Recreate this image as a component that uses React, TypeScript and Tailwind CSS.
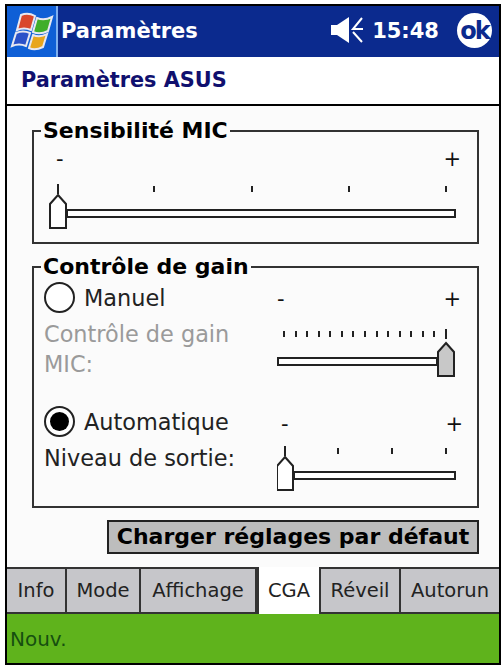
const font = { fontFamily: '"DejaVu Sans", sans-serif' };

function Slider({ ticks, thumb, disabled, width, trackTop }: { ticks: number[]; thumb: number; disabled?: boolean; width: number; trackTop: number }) {
  // thumb is the x of its centre, ticks sit above the track
  const trackLeft = thumb < width / 2 ? thumb + 9 : 1;
  const trackRight = thumb < width / 2 ? width - 1 : thumb - 9;
  const t = trackTop;
  return (
    <svg width={width} height={t + 24} className="block">
      {ticks.map((x) => (
        <line key={x} x1={x} x2={x} y1={x === thumb ? 0 : 2} y2={x === thumb ? 10 : 8} stroke="#222" strokeWidth="2" />
      ))}
      <rect x={trackLeft} y={t + 1} width={trackRight - trackLeft} height={7} fill="#fff" stroke="#222" strokeWidth="2" />
      <path
        d={`M${thumb} ${t - 14} L${thumb + 8} ${t - 5} V${t + 19} H${thumb - 8} V${t - 5} Z`}
        fill={disabled ? '#c8c8c8' : '#fff'}
        stroke="#222"
        strokeWidth="2"
      />
    </svg>
  );
}

function Radio({ checked }: { checked?: boolean }) {
  return (
    <span className="flex h-[31px] w-[31px] shrink-0 items-center justify-center rounded-full border-2 border-[#222] bg-white">
      {checked && <span className="h-[19px] w-[19px] rounded-full bg-black" />}
    </span>
  );
}

function Group({ title, className, children }: { title: string; className: string; children: React.ReactNode }) {
  return (
    <fieldset className={`ml-[25px] mr-[20px] border-2 border-[#333] ${className}`}>
      <legend className="ml-[7px] px-[2px] text-[22px] font-bold leading-[26px] text-black">{title}</legend>
      {children}
    </fieldset>
  );
}

function PlusMinus({ className }: { className: string }) {
  return (
    <div className={`flex items-center justify-between text-[21px] leading-[24px] text-[#111] ${className}`}>
      <span>-</span>
      <span>+</span>
    </div>
  );
}

const manualTicks = Array.from({ length: 15 }, (_, i) => 7 + Math.round(i * 11.57));

export default function App() {
  const tabs = [
    { label: 'Info', w: 'w-[60px]' },
    { label: 'Mode', w: 'w-[74px]' },
    { label: 'Affichage', w: 'w-[116px]' },
    { label: 'CGA', w: 'w-[64px]', active: true },
    { label: 'Réveil', w: 'w-[80px]' },
    { label: 'Autorun', w: 'flex-1' },
  ];

  return (
    <div className="h-[668px] w-[504px] bg-white pl-[5px] pr-[3px] pt-1 pb-[3px]" style={font}>
      <div className="flex h-full flex-col border-2 border-black bg-[#fbfbfb]">
        {/* title bar */}
        <div className="flex h-[51px] shrink-0 items-center bg-[#0b2a8e] text-white">
          <div className="flex h-full w-[51px] shrink-0 items-center justify-center border-r-2 border-[#7fb0ee] bg-[#0f5fd6]">
            <svg width="44" height="40" viewBox="0 0 44 40">
              <path d="M11 3 Q18 0 25 4 L21 18 Q14 15 7 18 Z" fill="#d9472b" stroke="#e8e8f0" strokeWidth="2" />
              <path d="M27 6 Q34 9 42 5 L38 19 Q30 23 23 20 Z" fill="#3fae2a" stroke="#e8e8f0" strokeWidth="2" />
              <path d="M6 21 Q13 18 20 21 L16 34 Q9 31 2 34 Z" fill="#2b52c8" stroke="#e8e8f0" strokeWidth="2" />
              <path d="M23 23 Q30 26 37 22 L33 35 Q25 39 19 36 Z" fill="#e8a61c" stroke="#e8e8f0" strokeWidth="2" />
            </svg>
          </div>
          <span className="ml-[3px] text-[21px] font-bold leading-none">Paramètres</span>
          <div className="ml-auto flex items-center">
            <svg width="34" height="28" viewBox="0 0 34 28" className="mb-[3px] mr-[7px]">
              <path d="M0 9 H6 L18 1 V27 L6 19 H0 Z" fill="#fff" />
              <path d="M31 2 L22 13 H32 M22 16 L31 26" fill="none" stroke="#fff" strokeWidth="2" />
            </svg>
            <span className="text-[21px] font-bold leading-none">15:48</span>
            <span className="ml-[18px] mb-[2px] mr-[7px] flex h-[35px] w-[35px] items-center justify-center rounded-full bg-white text-[24px] font-bold leading-none tracking-[-2px] text-[#0b2a8e]">ok</span>
          </div>
        </div>

        {/* page header */}
        <div className="flex h-[49px] shrink-0 items-center border-b-2 border-black bg-white pl-[14px] text-[20.8px] font-bold leading-none text-[#10106e]">
          Paramètres ASUS
        </div>

        {/* content */}
        <div className="flex-1 pt-[12px]">
          <Group title="Sensibilité MIC" className="h-[126px]">
            <div className="w-[433px] pl-[16px]">
              <PlusMinus className="mt-[3px] px-[6px]" />
              <div className="mt-[13px] -ml-[1px]">
                <Slider width={407} thumb={9} ticks={[9, 105, 203, 300, 397]} trackTop={25} />
              </div>
            </div>
          </Group>

          <Group title="Contrôle de gain" className="mt-[10px] h-[254px]">
            <div className="pl-[10px] pt-[2px]">
              <div className="grid grid-cols-[233px_186px]">
                <div className="text-[22.4px] leading-[30px]">
                  <div className="flex items-center gap-[9px] text-[#222]">
                    <Radio />
                    Manuel
                  </div>
                  <div className="mt-[6px] text-[#9a9a9a]">
                    Contrôle de gain
                    <br />
                    MIC:
                  </div>
                </div>
                <div>
                  <PlusMinus className="mt-[5px] pr-[2px]" />
                  <div className="mt-[18px]">
                    <Slider width={180} thumb={169} ticks={manualTicks} disabled trackTop={28} />
                  </div>
                </div>
              </div>

              <div className="mt-[25px] grid grid-cols-[233px_186px]">
                <div className="text-[22.4px] leading-[30px] text-[#222]">
                  <div className="flex items-center gap-[9px]">
                    <Radio checked />
                    Automatique
                  </div>
                  <div className="mt-[6px]">Niveau de sortie:</div>
                </div>
                <div>
                  <PlusMinus className="mt-[6px] pl-[4px]" />
                  <div className="mt-[10px]">
                    <Slider width={179} thumb={8} ticks={[8, 61, 115, 169]} trackTop={25} />
                  </div>
                </div>
              </div>
            </div>
          </Group>

          <div className="mt-[12px] flex justify-end pr-[20px]">
            <button className="flex h-[34px] w-[372px] items-center justify-center border-2 border-[#222] bg-[#bdbdbd] text-[22px] font-bold leading-none text-black">
              Charger réglages par défaut
            </button>
          </div>
        </div>

        {/* tabs */}
        <div className="flex h-[47px] shrink-0">
          {tabs.map((tab) => (
            <div
              key={tab.label}
              className={`flex items-center justify-center text-[19.5px] leading-none text-[#222] ${tab.w} ${
                tab.active ? 'border-x-2 border-[#333] bg-white' : 'border-y-2 border-r-2 border-[#333] bg-[#c6c6ca] last:border-r-0'
              }`}
            >
              {tab.label}
            </div>
          ))}
        </div>

        {/* command bar */}
        <div className="flex h-[49px] shrink-0 items-center bg-[#5fb31c] pl-[3px] text-[20px] leading-none text-[#164f10]">Nouv.</div>
      </div>
    </div>
  );
}
